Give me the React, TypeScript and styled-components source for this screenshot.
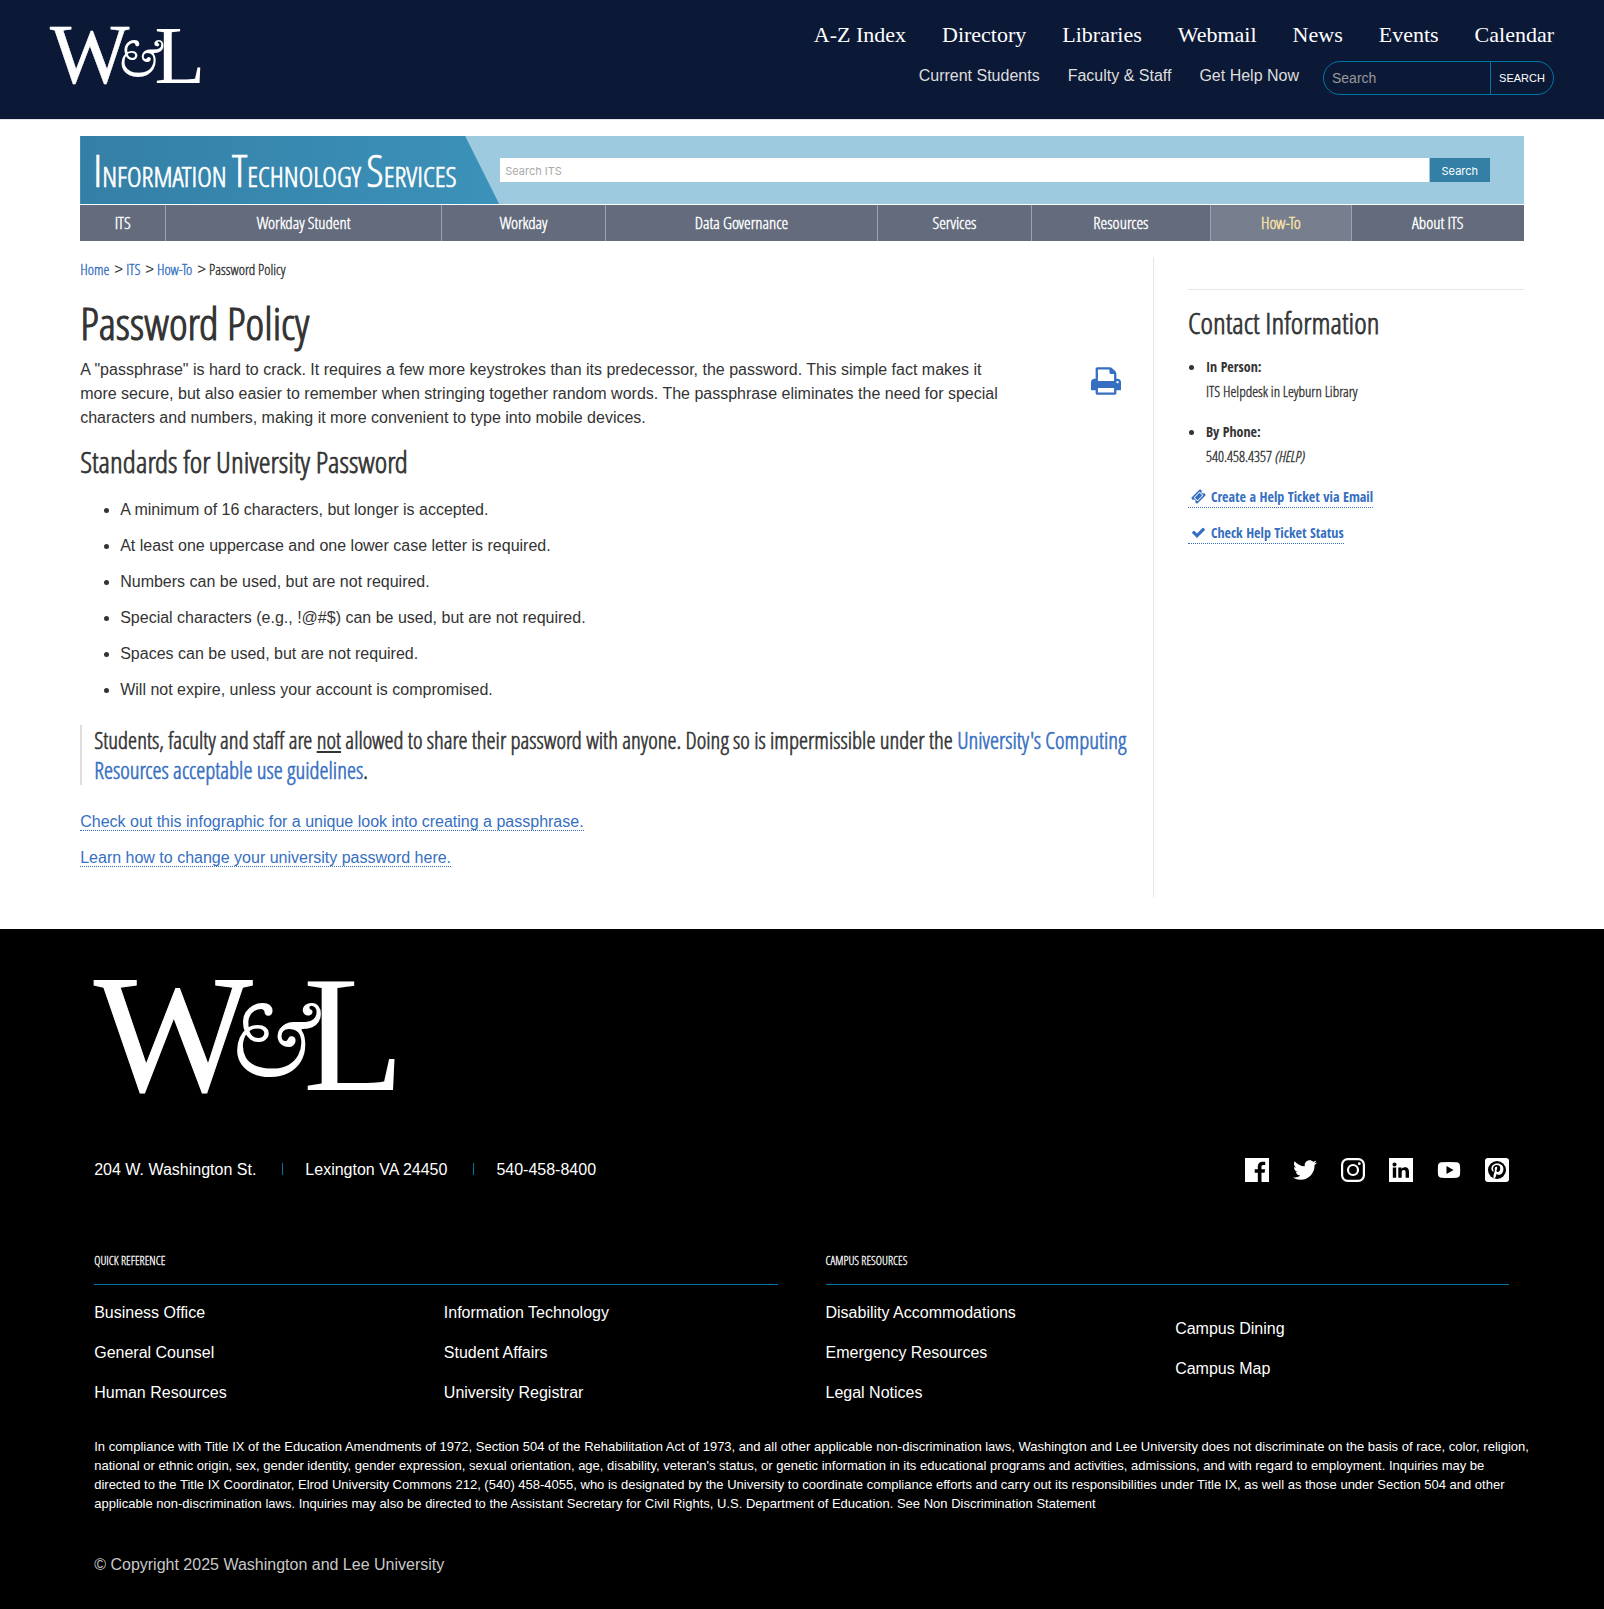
import React from "react";
import styled, { createGlobalStyle, css } from "styled-components";
import { FaTwitter } from "react-icons/fa";

const SANS = '"Liberation Sans", Arial, sans-serif';
const SERIF = '"Liberation Serif", "Times New Roman", serif';
const ORNAMENT = '"EB Garamond", "Liberation Serif", serif';
const COND = '"Open Sans Condensed Light", "Open Sans Condensed", "Roboto Condensed", sans-serif';
const COND_BOLD = '"Open Sans Condensed", "Roboto Condensed", sans-serif';

const Global = createGlobalStyle`
  *, *::before, *::after { box-sizing: border-box; }
  body { margin: 0; background: #fff; color: #333; font: 16px/24px ${SANS}; }
  h1, h2, h3, p, ul, ol, form { margin: 0; padding: 0; font-weight: normal; }
  ul, ol { list-style: none; }
  a { color: #366fc1; text-decoration: none; }
  svg { display: block; overflow: visible; }
`;

const condensed = css`
  font-family: ${COND};
  -webkit-text-stroke: 0.025em currentColor;
`;

/* ---------- site header ---------- */

const SiteHeader = styled.header`
  display: flex;
  justify-content: space-between;
  align-items: flex-start;
  padding: 23px 50px 24px;
  background: #0c1936;
  border-bottom: 1px solid #e3e5ea;
`;

const LogoLink = styled.a<{ $width: number }>`
  display: block;
  width: ${(p) => p.$width}px;
  color: #fff;
`;

const HeaderLogo = styled.div`
  padding-top: 4px;
`;

const HeaderTools = styled.div`
  display: flex;
  flex-direction: column;
  align-items: flex-end;
  gap: 14px;
`;

const PrimaryLinks = styled.nav`
  display: flex;
  gap: 36px;
  font: 22px/24px ${SERIF};
  a { color: #fff; }
`;

const UtilityRow = styled.div`
  display: flex;
  align-items: flex-start;
  gap: 24px;
`;

const UtilityLinks = styled.nav`
  display: flex;
  gap: 28px;
  padding-top: 3px;
  a { color: #dedede; }
`;

const PillSearch = styled.form`
  display: flex;
  width: 231px;
  height: 34px;
  border: 1px solid #0076a8;
  border-radius: 17px;
  overflow: hidden;
`;

const PillInput = styled.input`
  flex: 1;
  min-width: 0;
  padding: 0 8px;
  border: 0;
  outline: 0;
  background: transparent;
  color: #fff;
  font: 14px/20px ${SANS};
  &::placeholder { color: #999; opacity: 1; }
`;

const PillButton = styled.button`
  width: 63px;
  padding: 0;
  border: 0;
  border-left: 1px solid #0076a8;
  background: transparent;
  color: #fff;
  font: 11px/16px ${SANS};
`;

/* ---------- section banner ---------- */

const Container = styled.div`
  margin: 0 5%;
`;

const Banner = styled.div`
  display: flex;
  align-items: center;
  height: 68px;
  margin-top: 16px;
  padding-right: 34px;
  background: #9ecae0;
`;

const BannerTitle = styled.h2`
  ${condensed}
  flex: none;
  width: 420px;
  height: 68px;
  padding-left: 13px;
  background: linear-gradient(90deg, #347fa6, #3c92ba);
  clip-path: polygon(0 0, 385px 0, 419px 100%, 0 100%);
  font-size: 28px;
  line-height: 68px;
  text-transform: uppercase;
  white-space: nowrap;
  a { color: #fff; }
`;

const Initial = styled.span`
  font-size: 44px;
`;

const BannerSearch = styled.form`
  display: flex;
  flex: 1;
  gap: 1px;
  height: 24px;
`;

const BannerInput = styled.input`
  flex: 1;
  min-width: 0;
  padding: 2px 5px 0;
  border: 0;
  outline: 0;
  background: #fff;
  font: 11px/16px Inter, sans-serif;
  &::placeholder { color: #a9a9a9; opacity: 1; }
`;

const BannerButton = styled.button`
  width: 60px;
  padding: 2px 0 0;
  border: 0;
  background: #337fa6;
  color: #fff;
  font: 11px/16px Inter, sans-serif;
`;

const SectionNav = styled.nav`
  display: grid;
  grid-template-columns: 85fr 276fr 164fr 272fr 154fr 179fr 141fr 173fr;
  margin-top: 1px;
`;

const SectionLink = styled.a<{ $active?: boolean }>`
  ${condensed}
  font-size: 17px;
  line-height: 36px;
  text-align: center;
  color: ${(p) => (p.$active ? "#fde5a9" : "#fff")};
  background: ${(p) => (p.$active ? "#777f8e" : "#636b7c")};
  & + & { border-left: 1px solid #9ba2b0; }
`;

/* ---------- page body ---------- */

const Columns = styled.div`
  display: grid;
  grid-template-columns: 1074fr 370fr;
  margin-top: 16px;
  margin-bottom: 32px;
`;

const Main = styled.main`
  min-width: 0;
  padding: 0 32px 27px 0;
  border-right: 1px solid #e6e6e6;
`;

const Crumbs = styled.nav`
  ${condensed}
  display: flex;
  gap: 5px;
  font-size: 15px;
  margin-bottom: 18px;
`;

const Crumb = styled.span`
  display: flex;
  gap: 3px;
  & + &::before {
    content: ">";
    font-family: ${SANS};
    -webkit-text-stroke: 0;
  }
`;

const Title = styled.h1`
  ${condensed}
  font-size: 45px;
  line-height: 48px;
  margin-bottom: 11px;
`;

const Heading = styled.h2`
  ${condensed}
  font-size: 30px;
  line-height: 36px;
  margin-top: 14px;
`;

const Intro = styled.div`
  display: flex;
  justify-content: space-between;
  align-items: flex-start;
  p { flex: 0 1 90%; }
`;

const PrintButton = styled.button`
  margin-top: 9px;
  padding: 0;
  border: 0;
  background: none;
  color: #366fc1;
`;

const Standards = styled.ul`
  display: flex;
  flex-direction: column;
  gap: 12px;
  margin-top: 18px;
  padding-left: 40px;
  list-style: disc;
`;

const Notice = styled.blockquote`
  ${condensed}
  margin: 23px -10px 25px 0;
  padding-left: 12px;
  border-left: 2px solid #ddd;
  font-size: 23px;
  line-height: 30px;
`;

const LinkLine = styled.p`
  & + & { margin-top: 12px; }
  a { border-bottom: 1px dotted #366fc1; }
`;

const Sidebar = styled.aside`
  ${condensed}
  margin: 32px 0 0 34px;
  padding-top: 1px;
  border-top: 1px solid #e6e6e6;
  font-size: 15px;
`;

const Contacts = styled.ul`
  display: flex;
  flex-direction: column;
  gap: 16px;
  margin: 13px 0 16px;
  padding-left: 18px;
  list-style: disc;
`;

const Label = styled.strong`
  display: block;
  font: 700 14px/24px ${COND_BOLD};
  -webkit-text-stroke: 0;
`;

const HelpLink = styled.a`
  display: inline-block;
  padding-left: 3px;
  border-bottom: 1px dotted #366fc1;
  font: 700 14px/20px ${COND_BOLD};
  -webkit-text-stroke: 0;
  svg {
    display: inline-block;
    margin-right: 5px;
    vertical-align: -2px;
  }
`;

const HelpLine = styled.p`
  line-height: 24px;
  & + & { margin-top: 12px; }
`;

/* ---------- footer ---------- */

const SiteFooter = styled.footer`
  padding: 49px 5% 33px;
  background: #000;
  color: #fff;
  a { color: #fff; }
`;

const FooterInner = styled.div`
  padding: 0 15px 0 14px;
`;

const ContactRow = styled.div`
  display: flex;
  justify-content: space-between;
  align-items: center;
  margin: 64px 0 67px;
`;

const Address = styled.ul`
  display: flex;
  align-items: center;
  li + li::before {
    content: "";
    display: inline-block;
    width: 1px;
    height: 12px;
    margin: 0 22px 0 26px;
    background: #0076a8;
  }
`;

const Social = styled.ul`
  display: flex;
  gap: 24px;
`;

const LinkGroups = styled.div`
  display: grid;
  grid-template-columns: 1fr 1fr;
  gap: 48px;
`;

const GroupTitle = styled.h3`
  ${condensed}
  padding-bottom: 11px;
  border-bottom: 1px solid #0076a8;
  font-size: 12px;
  text-transform: uppercase;
`;

const GroupColumns = styled.div`
  display: grid;
  grid-template-columns: 350fr 334fr;
  align-items: start;
  margin-top: 16px;
`;

const GroupList = styled.ul<{ $inset: boolean }>`
  display: flex;
  flex-direction: column;
  gap: 16px;
  padding-top: ${(p) => (p.$inset ? 16 : 0)}px;
`;

/* the fine print runs a little wider than the link groups above it */
const Compliance = styled.p`
  margin: 32px -24px 40px 0;
  font-size: 13px;
  line-height: 19px;
`;

const Copyright = styled.p`
  color: #c8c8c8;
`;

/* ---------- drawings ---------- */

const Logo = () => (
  <svg viewBox="0 0 300 116" width="100%" fill="currentColor" role="img" aria-label="Washington and Lee University">
    <text x="0" y="112" fontFamily={SERIF} fontSize="168" stroke="currentColor" strokeWidth="1">W</text>
    <text x="134" y="97" fontFamily={ORNAMENT} fontSize="102" fontStyle="italic">&amp;</text>
    <text x="209" y="112" fontFamily={SERIF} fontSize="166">L</text>
  </svg>
);

const PrintIcon = () => (
  <svg width="30" height="28" viewBox="0 128 1664 1536" fill="currentColor">
    <path d="M384 1536h896v-256h-896v256zM384 896h896v-384h-160q-40 0-68-28t-28-68v-160h-640v640zM1536 960q0-26-19-45t-45-19-45 19-19 45 19 45 45 19 45-19 19-45zM1664 960v416q0 13-9.5 22.5t-22.5 9.5h-224v160q0 40-28 68t-68 28h-960q-40 0-68-28t-28-68v-160h-224q-13 0-22.5-9.5t-9.5-22.5v-416q0-79 56.5-135.5t135.5-56.5h64v-544q0-40 28-68t68-28h672q40 0 88 20t76 48l152 152q28 28 48 76t20 88v256h64q79 0 135.5 56.5t56.5 135.5z" />
  </svg>
);

const TicketIcon = () => (
  <svg width="15" height="15" viewBox="0 0 1792 1792" fill="currentColor">
    <path d="M1024 452l316 316-572 572-316-316zM813 1431l618-618q19-19 19-45t-19-45l-362-362q-18-18-45-18t-45 18l-618 618q-19 19-19 45t19 45l362 362q18 18 45 18t45-18zM1702 794l-907 908q-37 37-90.5 37t-90.5-37l-126-126q56-56 56-136t-56-136-136-56-136 56l-125-126q-37-37-37-90.5t37-90.5l907-906q37-37 90.5-37t90.5 37l125 125q-56 56-56 136t56 136 136 56 136-56l126 125q37 37 37 90.5t-37 90.5z" />
  </svg>
);

const CheckIcon = () => (
  <svg width="15" height="15" viewBox="0 0 1792 1792" fill="currentColor">
    <path d="M1671 566q0 40-28 68l-724 724-136 136q-28 28-68 28t-68-28l-136-136-362-362q-28-28-28-68t28-68l136-136q28-28 68-28t68 28l294 295 656-657q28-28 68-28t68 28l136 136q28 28 28 68z" />
  </svg>
);

const FacebookIcon = () => (
  <svg width="24" height="24" viewBox="0 0 24 24" fill="currentColor">
    <path d="M0 0h24v24h-7.500v-9.200h3.100l.5-3.600h-3.600v-2.300c0-1.100.3-1.800 1.800-1.800h1.900v-3.200c-.3 0-1.500-.1-2.800-.1-2.800 0-4.600 1.700-4.600 4.800v2.600h-3.100v3.600h3.100v9.200h-12.800z" />
  </svg>
);

const InstagramIcon = () => (
  <svg width="24" height="24" viewBox="0 0 24 24" fill="none" stroke="currentColor" strokeWidth="2.200">
    <rect x="1.100" y="1.100" width="21.800" height="21.800" rx="5.600" />
    <circle cx="12" cy="12" r="5" />
    <circle cx="18.300" cy="5.700" r="1.400" fill="currentColor" stroke="none" />
  </svg>
);

const LinkedInIcon = () => (
  <svg width="24" height="24" viewBox="0 0 24 24">
    <rect width="24" height="24" fill="currentColor" />
    <g fill="#000">
      <circle cx="5.500" cy="6.500" r="2" />
      <path d="M3.800 9.500h3.400v10.300h-3.400zM9.300 9.500h3.200v1.500c.6-1 1.700-1.800 3.300-1.800 3.300 0 4.200 2 4.200 5v5.600h-3.400v-5.100c0-1.400-.2-2.600-1.800-2.600s-2.100 1.100-2.100 2.600v5.100h-3.400z" />
    </g>
  </svg>
);

const YouTubeIcon = () => (
  <svg width="24" height="24" viewBox="0 0 24 24">
    <path fill="currentColor" d="M4.500 4.300q7.500-.6 15 0 3.200.2 3.500 3.200.4 4.500 0 9-.3 3-3.500 3.200-7.500.6-15 0-3.200-.2-3.500-3.200-.4-4.500 0-9 .3-3 3.500-3.200z" />
    <path fill="#000" d="M9.500 8l7 4-7 4z" />
  </svg>
);

const PinterestIcon = () => (
  <svg width="24" height="24" viewBox="0 0 24 24">
    <rect width="24" height="24" rx="3" fill="currentColor" />
    <circle cx="12" cy="12" r="9" fill="#000" />
    <path
      fill="currentColor"
      d="M12.300 5.600c-3.900 0-5.900 2.600-5.900 5 0 1.400.5 2.600 1.600 3 .2.100.4 0 .4-.2l.2-.7c.1-.2 0-.3-.1-.5-.3-.4-.5-.9-.5-1.600 0-2 1.500-3.700 3.900-3.700 2.100 0 3.300 1.300 3.300 3 0 2.300-1 4.200-2.500 4.200-.8 0-1.400-.7-1.200-1.500.2-1 .7-2 .7-2.700 0-.6-.3-1.200-1-1.200-.8 0-1.500.9-1.500 2 0 .7.3 1.200.3 1.200l-1.500 5.300 0 2.800 1.200.5c.3-.5 1-1.700 1.300-2.600l.6-2.200c.3.600 1.200 1.100 2.100 1.100 2.800 0 4.700-2.500 4.700-5.900 0-2.900-2.400-5.300-6.100-5.300z"
    />
  </svg>
);

/* ---------- content ---------- */

const primary = ["A-Z Index", "Directory", "Libraries", "Webmail", "News", "Events", "Calendar"];
const utility = ["Current Students", "Faculty & Staff", "Get Help Now"];
const section = ["ITS", "Workday Student", "Workday", "Data Governance", "Services", "Resources", "How-To", "About ITS"];
const rules = [
  "A minimum of 16 characters, but longer is accepted.",
  "At least one uppercase and one lower case letter is required.",
  "Numbers can be used, but are not required.",
  "Special characters (e.g., !@#$) can be used, but are not required.",
  "Spaces can be used, but are not required.",
  "Will not expire, unless your account is compromised.",
];
const social = [
  { name: "Facebook", icon: <FacebookIcon /> },
  { name: "Twitter", icon: <FaTwitter size={24} /> },
  { name: "Instagram", icon: <InstagramIcon /> },
  { name: "LinkedIn", icon: <LinkedInIcon /> },
  { name: "YouTube", icon: <YouTubeIcon /> },
  { name: "Pinterest", icon: <PinterestIcon /> },
];
const groups = [
  {
    title: "Quick Reference",
    columns: [
      ["Business Office", "General Counsel", "Human Resources"],
      ["Information Technology", "Student Affairs", "University Registrar"],
    ],
  },
  {
    title: "Campus Resources",
    columns: [
      ["Disability Accommodations", "Emergency Resources", "Legal Notices"],
      ["Campus Dining", "Campus Map"],
    ],
  },
];

const stay = (e: React.FormEvent) => e.preventDefault();

export default function App() {
  return (
    <>
      <Global />
      <SiteHeader>
        <HeaderLogo>
          <LogoLink href="#" $width={150}><Logo /></LogoLink>
        </HeaderLogo>
        <HeaderTools>
          <PrimaryLinks>
            {primary.map((t) => <a href="#" key={t}>{t}</a>)}
          </PrimaryLinks>
          <UtilityRow>
            <UtilityLinks>
              {utility.map((t) => <a href="#" key={t}>{t}</a>)}
            </UtilityLinks>
            <PillSearch onSubmit={stay}>
              <PillInput aria-label="Search" placeholder="Search" />
              <PillButton>SEARCH</PillButton>
            </PillSearch>
          </UtilityRow>
        </HeaderTools>
      </SiteHeader>

      <Container>
        <Banner>
          <BannerTitle>
            <a href="#">
              <Initial>I</Initial>nformation <Initial>T</Initial>echnology <Initial>S</Initial>ervices
            </a>
          </BannerTitle>
          <BannerSearch onSubmit={stay}>
            <BannerInput aria-label="Search ITS" placeholder="Search ITS" />
            <BannerButton>Search</BannerButton>
          </BannerSearch>
        </Banner>
        <SectionNav>
          {section.map((t) => (
            <SectionLink href="#" key={t} $active={t === "How-To"}>{t}</SectionLink>
          ))}
        </SectionNav>

        <Columns>
          <Main>
            <Crumbs aria-label="Breadcrumb">
              <Crumb><a href="#">Home</a></Crumb>
              <Crumb><a href="#">ITS</a></Crumb>
              <Crumb><a href="#">How-To</a></Crumb>
              <Crumb>Password Policy</Crumb>
            </Crumbs>
            <Title>Password Policy</Title>
            <Intro>
              <p>
                A "passphrase" is hard to crack. It requires a few more keystrokes than its predecessor, the password.
                This simple fact makes it more secure, but also easier to remember when stringing together random words.
                The passphrase eliminates the need for special characters and numbers, making it more convenient to type
                into mobile devices.
              </p>
              <PrintButton aria-label="Print this page"><PrintIcon /></PrintButton>
            </Intro>
            <Heading>Standards for University Password</Heading>
            <Standards>
              {rules.map((r) => <li key={r}>{r}</li>)}
            </Standards>
            <Notice>
              Students, faculty and staff are <u>not</u> allowed to share their password with anyone. Doing so is
              impermissible under the <a href="#">University's Computing Resources acceptable use guidelines</a>.
            </Notice>
            <LinkLine><a href="#">Check out this infographic for a unique look into creating a passphrase.</a></LinkLine>
            <LinkLine><a href="#">Learn how to change your university password here.</a></LinkLine>
          </Main>
          <Sidebar>
            <Heading>Contact Information</Heading>
            <Contacts>
              <li><Label>In Person:</Label>ITS Helpdesk in Leyburn Library</li>
              <li><Label>By Phone:</Label>540.458.4357 <em>(HELP)</em></li>
            </Contacts>
            <HelpLine><HelpLink href="#"><TicketIcon />Create a Help Ticket via Email</HelpLink></HelpLine>
            <HelpLine><HelpLink href="#"><CheckIcon />Check Help Ticket Status</HelpLink></HelpLine>
          </Sidebar>
        </Columns>
      </Container>

      <SiteFooter>
        <FooterInner>
          <LogoLink href="#" $width={300}><Logo /></LogoLink>
          <ContactRow>
            <Address>
              <li>204 W. Washington St.</li>
              <li>Lexington VA 24450</li>
              <li>540-458-8400</li>
            </Address>
            <Social>
              {social.map((s) => <li key={s.name}><a href="#" aria-label={s.name}>{s.icon}</a></li>)}
            </Social>
          </ContactRow>
          <LinkGroups>
            {groups.map((g) => (
              <section key={g.title}>
                <GroupTitle>{g.title}</GroupTitle>
                <GroupColumns>
                  {g.columns.map((c) => (
                    <GroupList key={c[0]} $inset={c.length < 3}>
                      {c.map((t) => <li key={t}><a href="#">{t}</a></li>)}
                    </GroupList>
                  ))}
                </GroupColumns>
              </section>
            ))}
          </LinkGroups>
          <Compliance>
            In compliance with Title IX of the Education Amendments of 1972, Section 504 of the Rehabilitation Act of
            1973, and all other applicable non-discrimination laws, Washington and Lee University does not discriminate
            on the basis of race, color, religion, national or ethnic origin, sex, gender identity, gender expression,
            sexual orientation, age, disability, veteran's status, or genetic information in its educational programs
            and activities, admissions, and with regard to employment. Inquiries may be directed to the Title IX
            Coordinator, Elrod University Commons 212, (540) 458-4055, who is designated by the University to coordinate
            compliance efforts and carry out its responsibilities under Title IX, as well as those under Section 504 and
            other applicable non-discrimination laws. Inquiries may also be directed to the Assistant Secretary for
            Civil Rights, U.S. Department of Education. See <a href="#">Non Discrimination Statement</a>
          </Compliance>
          <Copyright>© Copyright 2025 Washington and Lee University</Copyright>
        </FooterInner>
      </SiteFooter>
    </>
  );
}
